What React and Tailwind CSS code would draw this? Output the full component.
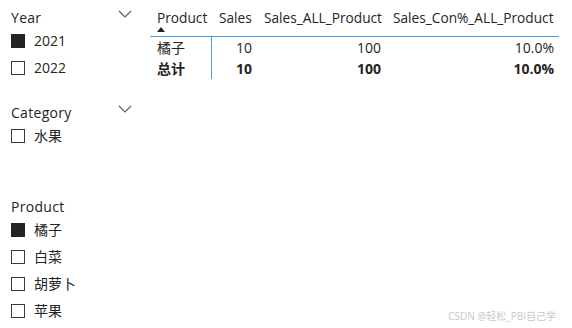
import React from 'react';

const slicers = [
  { title: 'Year', chevron: true, items: [{ label: '2021', checked: true }, { label: '2022' }] },
  { title: 'Category', chevron: true, items: [{ label: '水果' }] },
  {
    title: 'Product',
    chevron: false,
    items: [{ label: '橘子', checked: true }, { label: '白菜' }, { label: '胡萝卜' }, { label: '苹果' }],
  },
];

const font = { fontFamily: '"Open Sans", "Noto Sans CJK SC", sans-serif' };

const Checkbox = ({ checked }) => (
  <span
    className={`w-[14px] h-[14px] shrink-0 border ${checked ? 'bg-[#252423] border-[#252423]' : 'bg-white border-[#3b3a39]'}`}
  />
);

const Chevron = () => (
  <svg width="14" height="8" viewBox="0 0 14 8" className="mt-[-6px]">
    <path d="M1 1l6 6 6-6" fill="none" stroke="#605e5c" strokeWidth="1.2" />
  </svg>
);

const Slicer = ({ title, chevron, items, className }) => (
  <div className={className}>
    <div className="h-[20px] flex items-center justify-between pr-[18px]">
      <span className="text-[14px] text-[#252423] tracking-[0.3px]">{title}</span>
      {chevron && <Chevron />}
    </div>
    {items.map((item) => (
      <div key={item.label} className="h-[27px] flex items-center gap-[9px]">
        <Checkbox checked={item.checked} />
        <span className="text-[14px] text-[#252423]">{item.label}</span>
      </div>
    ))}
  </div>
);

const cols = [
  { name: 'Product', w: 'w-[62px]' },
  { name: 'Sales', w: 'w-[45px]' },
  { name: 'Sales_ALL_Product', w: 'w-[129px]' },
  { name: 'Sales_Con%_ALL_Product', w: 'w-[173px]' },
];

const rows = [
  { cells: ['橘子', '10', '100', '10.0%'], bold: false },
  { cells: ['总计', '10', '100', '10.0%'], bold: true },
];

export default function App() {
  return (
    <div className="relative w-[572px] h-[328px] bg-white overflow-hidden flex" style={font}>
      {/* slicers */}
      <div className="w-[150px] pl-[11px] pt-[7px] flex flex-col">
        <Slicer {...slicers[0]} />
        <Slicer {...slicers[1]} className="mt-[21px]" />
        <Slicer {...slicers[2]} className="mt-[47px]" />
      </div>

      {/* table */}
      <div className="pt-[8px]">
        <div className="flex h-[29px] border-b border-[#4a9ee8]">
          {cols.map((c, i) => (
            <div key={c.name} className={`${c.w} relative pl-[7px] text-[13.7px] text-[#252423] whitespace-nowrap leading-[20px]`}>
              {c.name}
              {i === 0 && (
                <svg width="8" height="5" viewBox="0 0 8 5" className="absolute left-[7px] top-[19px]">
                  <path d="M0 5L4 0l4 5z" fill="#252423" />
                </svg>
              )}
            </div>
          ))}
        </div>
        {rows.map((r) => (
          <div key={r.cells[0]} className={`flex h-[21px] items-center text-[14px] text-[#252423] ${r.bold ? 'font-bold' : ''}`}>
            {r.cells.map((v, i) => (
              <div
                key={i}
                className={`${cols[i].w} h-full flex items-center ${i === 0 ? 'pl-[7px] border-r border-[#4a9ee8]' : 'justify-end pr-[5px]'}`}
              >
                {v}
              </div>
            ))}
          </div>
        ))}
      </div>

      <div className="absolute right-[16px] bottom-[4px] text-[10px] text-[#c8c8c8]">CSDN @轻松_PBI自己学</div>
    </div>
  );
}
